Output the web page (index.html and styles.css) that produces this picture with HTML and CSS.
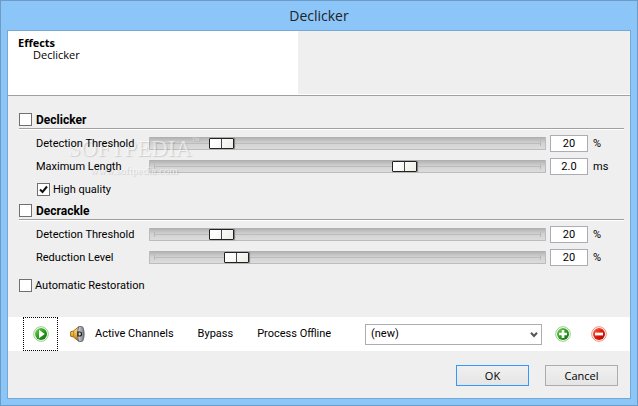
FILE: index.html
```html
<!DOCTYPE html>
<html lang="en">
<head>
    <meta charset="UTF-8">
    <meta name="viewport" content="width=device-width, initial-scale=1.0">
    <title>Declicker</title>
    <link rel="stylesheet" href="styles.css">
</head>
<body>
    <div class="window">
        <h1 class="titlebar">Declicker</h1>

        <form class="client">
            <header class="header">
                <div class="header-info">
                    <strong>Effects</strong>
                    <p>Declicker</p>
                </div>
            </header>

            <main class="settings">
                <section class="group">
                    <h2 class="group-title">
                        <input type="checkbox" id="declicker">
                        <label for="declicker">Declicker</label>
                    </h2>
                    <div class="row">
                        <label for="click-threshold">Detection Threshold</label>
                        <input type="range" id="click-threshold" min="0" max="100" value="16">
                        <input type="text" class="value" value="20" aria-label="Detection Threshold value">
                        <span class="unit">%</span>
                    </div>
                    <div class="row">
                        <label for="max-length">Maximum Length</label>
                        <input type="range" id="max-length" min="0" max="200" value="131">
                        <input type="text" class="value" value="2.0" aria-label="Maximum Length value">
                        <span class="unit">ms</span>
                    </div>
                    <div class="check-row indent">
                        <input type="checkbox" id="quality" checked>
                        <label for="quality">High quality</label>
                    </div>
                    <div class="watermark" aria-hidden="true">
                        <div class="watermark-name">SOFTPEDIA<sup>™</sup></div>
                        <div class="watermark-url">www.softpedia.com</div>
                    </div>
                </section>

                <section class="group">
                    <h2 class="group-title">
                        <input type="checkbox" id="decrackle">
                        <label for="decrackle">Decrackle</label>
                    </h2>
                    <div class="row">
                        <label for="crackle-threshold">Detection Threshold</label>
                        <input type="range" id="crackle-threshold" min="0" max="100" value="16">
                        <input type="text" class="value" value="20" aria-label="Detection Threshold value">
                        <span class="unit">%</span>
                    </div>
                    <div class="row">
                        <label for="reduction">Reduction Level</label>
                        <input type="range" id="reduction" min="0" max="100" value="20">
                        <input type="text" class="value" value="20" aria-label="Reduction Level value">
                        <span class="unit">%</span>
                    </div>
                </section>

                <div class="check-row auto">
                    <input type="checkbox" id="auto">
                    <label for="auto">Automatic Restoration</label>
                </div>
            </main>

            <div class="toolbar">
                <button type="button" class="tool play" aria-label="Play">
                    <svg width="16" height="16" viewBox="0 0 16 16">
                        <defs>
                            <linearGradient id="green" x1="0" y1="0" x2="1" y2="1">
                                <stop offset="0" stop-color="#7fd45a"/>
                                <stop offset=".55" stop-color="#25971c"/>
                                <stop offset="1" stop-color="#0c6b0c"/>
                            </linearGradient>
                        </defs>
                        <circle cx="8" cy="8" r="7.3" fill="#fff" stroke="#8fce83"/>
                        <circle cx="8" cy="8" r="6" fill="url(#green)"/>
                        <path d="M6 3.800v8.400L11.800 8z" fill="#fff"/>
                    </svg>
                </button>
                <button type="button" class="tool channels">
                    <svg width="15" height="16" viewBox="0 0 15 16">
                        <defs>
                            <linearGradient id="gold" x1="0" y1="0" x2="0" y2="1">
                                <stop offset="0" stop-color="#fbe08a"/>
                                <stop offset=".5" stop-color="#f0b93a"/>
                                <stop offset="1" stop-color="#a86a10"/>
                            </linearGradient>
                            <linearGradient id="steel" x1="0" y1="0" x2="1" y2="0">
                                <stop offset="0" stop-color="#dcdce2"/>
                                <stop offset="1" stop-color="#74747e"/>
                            </linearGradient>
                        </defs>
                        <path d="M.6 5.800 3.400 5 8.600.8v14.400L3.400 11 .6 10.200z" fill="url(#gold)" stroke="#94621a" stroke-width=".9"/>
                        <path d="M3.600 5v6" stroke="#b5781c" stroke-width=".8"/>
                        <path d="M8.600.7c1.600-.4 3.200-.2 4.200.4 1.800 3.600 1.800 10.200 0 13.800-1 .6-2.600.8-4.200.4-1.400-4-1.400-10.600 0-14.600z" fill="url(#steel)" stroke="#62626a" stroke-width=".9"/>
                        <path d="M8 6h1.500a2 2 0 0 1 0 4H8z" fill="#d8d8dc" stroke="#1c1c20" stroke-width="1.200"/>
                    </svg>
                    Active Channels
                </button>
                <button type="button" class="tool bypass">Bypass</button>
                <button type="button" class="tool offline">Process Offline</button>
                <div class="preset">
                    <select aria-label="Preset">
                        <option>(new)</option>
                    </select>
                    <svg class="arrow" width="8" height="6" viewBox="0 0 8 6">
                        <path d="M1 .8 4 4l3-3.200" fill="none" stroke="#555" stroke-width="2"/>
                    </svg>
                </div>
                <button type="button" class="tool add" aria-label="Add preset">
                    <svg width="16" height="16" viewBox="0 0 16 16">
                        <circle cx="8" cy="8" r="7.300" fill="#fff" stroke="#8fce83"/>
                        <circle cx="8" cy="8" r="6" fill="url(#green)"/>
                        <path d="M8 4v8M4 8h8" stroke="#fff" stroke-width="2.600"/>
                    </svg>
                </button>
                <button type="button" class="tool remove" aria-label="Remove preset">
                    <svg width="16" height="16" viewBox="0 0 16 16">
                        <defs>
                            <linearGradient id="red" x1="0" y1="0" x2="1" y2="1">
                                <stop offset="0" stop-color="#ff6a4a"/>
                                <stop offset=".5" stop-color="#e01c08"/>
                                <stop offset="1" stop-color="#a80000"/>
                            </linearGradient>
                        </defs>
                        <circle cx="8" cy="8" r="7.300" fill="#fff" stroke="#f58a7a"/>
                        <circle cx="8" cy="8" r="6" fill="url(#red)"/>
                        <path d="M4 8h8" stroke="#fff" stroke-width="2.800"/>
                    </svg>
                </button>
            </div>

            <footer class="footer">
                <button type="submit" class="btn btn-default">OK</button>
                <button type="button" class="btn">Cancel</button>
            </footer>
        </form>
    </div>
</body>
</html>
```
FILE: styles.css
```css
* {
    margin: 0;
    padding: 0;
    box-sizing: border-box;
}

body {
    font-family: Roboto, Tahoma, sans-serif;
    font-size: 11px;
    line-height: 14px;
    color: #000;
}

.window {
    display: flex;
    flex-direction: column;
    min-height: 100vh;
    padding: 0 6px 6px;
    background: #8cc6f9;
    border: 1px solid #6c9bc8;
}

.titlebar {
    height: 29px;
    font: 14px/29px "Open Sans", "Noto Sans", sans-serif;
    text-align: center;
    color: #222;
}

.client {
    flex: 1;
    display: flex;
    flex-direction: column;
    background: #efefef;
    border: 1px solid #76a8d6;
}

/* header */
.header {
    display: flex;
    height: 65px;
    border-bottom: 1px solid #a0a0a0;
    box-shadow: inset 0 -1px #fff;
}

.header-info {
    width: 290px;
    padding: 6px 10px;
    font: 11px/12px "Open Sans", "Noto Sans", sans-serif;
    background: #fff;
}

.header-info p {
    padding-left: 15px;
}

/* settings */
.settings {
    flex: 1;
    padding: 16px 6px 0 11px;
}

.group {
    position: relative;
    margin-bottom: 2px;
}

.group-title {
    display: flex;
    align-items: flex-start;
    gap: 4px;
    height: 18px;
    padding-top: 1px;
    margin-bottom: 2px;
    font-size: 12px;
    border-bottom: 1px solid #fff;
    box-shadow: inset 0 -1px #a0a0a0;
}

.row {
    display: grid;
    grid-template-columns: 113px 1fr 38px 31px;
    align-items: center;
    height: 23px;
    padding-left: 17px;
    padding-right: 5px;
}

/* keep labels readable above the watermark */
.row label {
    position: relative;
    z-index: 1;
}

.check-row {
    display: flex;
    align-items: center;
    gap: 3px;
    height: 23px;
}

.check-row.indent {
    padding-left: 18px;
}

.check-row.auto {
    margin-top: 5px;
}

input[type="checkbox"] {
    appearance: none;
    width: 13px;
    height: 13px;
    background: #fff;
    border: 1px solid #707070;
}

input[type="checkbox"]:checked {
    background: #fff url("data:image/svg+xml,%3Csvg xmlns='http://www.w3.org/2000/svg' viewBox='0 0 11 11'%3E%3Cpath d='M2 5.500 4.500 8 9 2.500' fill='none' stroke='%23111' stroke-width='2'/%3E%3C/svg%3E") center / 11px;
}

input[type="range"] {
    appearance: none;
    width: calc(100% - 4px);
    height: 13px;
    background:
        linear-gradient(#b8b8b8, #b8b8b8) 4px 3px / 1px 5px no-repeat,
        linear-gradient(#b8b8b8, #b8b8b8) right 4px top 3px / 1px 5px no-repeat,
        linear-gradient(#bcbcbc, #bcbcbc) center / calc(100% - 10px) 1px no-repeat,
        linear-gradient(#b4b4b4, #d2d2d2 5px, #dcdcdc);
    border: 1px solid #bcbcbc;
    border-top-color: #b0b0b0;
    border-radius: 1px;
}

input[type="range"]::-webkit-slider-thumb {
    appearance: none;
    width: 25px;
    height: 11px;
    background:
        linear-gradient(#444, #444) center / 1px 100% no-repeat,
        linear-gradient(135deg, #fff 20%, #ecede6);
    border: 1px solid #222;
    border-radius: 1px;
    box-shadow: 1px 0 1px #777;
}

.value {
    width: 38px;
    height: 17px;
    font: inherit;
    text-align: center;
    background: #fff;
    border: 1px solid #abadb3;
}

.unit {
    padding-left: 5px;
}

.watermark {
    position: absolute;
    left: 49px;
    top: 25px;
    color: rgba(255, 255, 255, 0.6);
    text-align: center;
    text-shadow: 1px 1px 1px rgba(0, 0, 0, 0.15);
    pointer-events: none;
}

.watermark-name {
    font: 23px/24px "Liberation Serif", serif;
}

.watermark-name sup {
    font-size: 8px;
    vertical-align: top;
    line-height: 8px;
}

.watermark-url {
    font: 11px/18px "Liberation Serif", serif;
}

/* toolbar */
.toolbar {
    display: flex;
    align-items: center;
    height: 34px;
    padding: 0 23px 0 15px;
    background: #fff;
}

.tool {
    display: flex;
    align-items: center;
    justify-content: center;
    font: inherit;
    color: inherit;
    background: none;
    border: none;
}

.play {
    width: 35px;
    height: 34px;
    border: 1px dotted #000;
}

.channels {
    gap: 10px;
    margin-left: 12px;
}

.bypass,
.offline {
    margin-left: 24px;
}

.preset {
    position: relative;
    width: 177px;
    margin-left: auto;
}

.preset select {
    appearance: none;
    width: 100%;
    height: 21px;
    padding-left: 5px;
    font: inherit;
    color: inherit;
    background: #fff;
    border: 1px solid #abadb3;
}

.arrow {
    position: absolute;
    right: 4px;
    top: 8px;
    pointer-events: none;
}

.add {
    margin-left: 13px;
}

.remove {
    margin-left: 20px;
}

/* footer */
.footer {
    display: flex;
    justify-content: flex-end;
    gap: 16px;
    padding: 14px 12px 12px;
}

.btn {
    width: 73px;
    height: 21px;
    font: 11px "Open Sans", "Noto Sans", sans-serif;
    background: linear-gradient(#f0f0f0, #e5e5e5);
    border: 1px solid #acacac;
}

.btn-default {
    border-color: #3399ff;
}
```
